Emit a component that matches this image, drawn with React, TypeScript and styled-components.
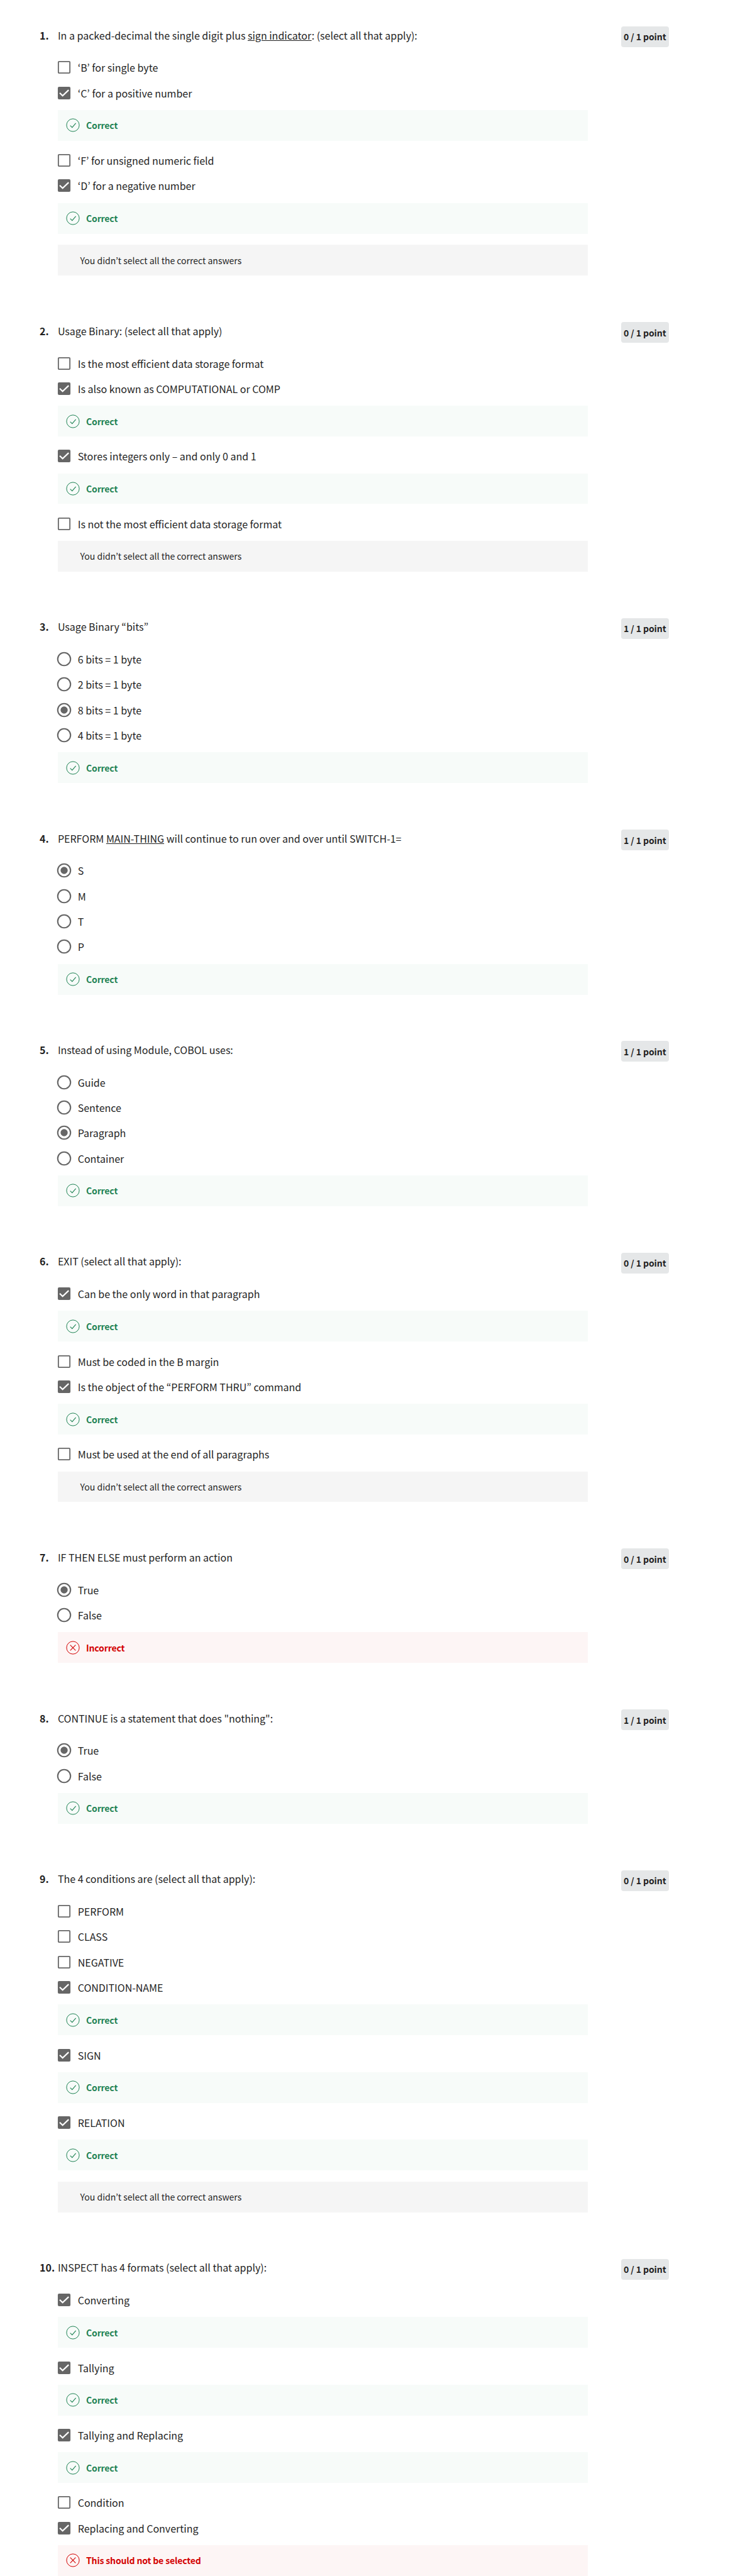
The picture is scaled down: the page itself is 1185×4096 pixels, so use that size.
import React from 'react';
import styled, { createGlobalStyle } from 'styled-components';

const Global = createGlobalStyle`
  body { margin: 0; background: #fff; }
`;

const Page = styled.main`
  box-sizing: border-box;
  width: 1185px;
  height: 4096px;
  overflow: hidden;
  padding: 38.6px 0 0 63px;
  font-family: 'Noto Sans CJK KR', 'Noto Sans', sans-serif;
  font-size: 16px;
  color: #1f1f1f;
`;

const QuestionRow = styled.section`
  display: grid;
  grid-template-columns: 28.9px 843px 52.9px 76px;
  margin-bottom: 70.5px;

  &:last-child {
    margin-bottom: 0;
  }
`;

const Num = styled.span`
  font-weight: 700;
  line-height: 34px;
  white-space: nowrap;
`;

const Body = styled.div`
  display: flex;
  flex-direction: column;
`;

const Title = styled.h2`
  margin: 0 0 14.6px;
  font-size: 16px;
  font-weight: 400;
  line-height: 34px;
`;

const OptionRow = styled.label`
  display: flex;
  align-items: center;
  height: 40.32px;
`;

const Mark = styled.svg`
  flex: none;
  width: 24px;
  height: 24px;
  margin: 0 9.8px 0 -2px;
`;

const OptionText = styled.span`
  line-height: 24px;
  white-space: nowrap;
`;

const tones = {
  ok: { bg: '#f7fbf9', fg: '#1f8354' },
  bad: { bg: '#fdf5f5', fg: '#d30001' },
  note: { bg: '#f5f5f5', fg: '#1f1f1f' },
};
type Tone = keyof typeof tones;

const Banner = styled.div<{ $tone: Tone }>`
  box-sizing: border-box;
  display: flex;
  flex: none;
  align-items: center;
  height: 48.9px;
  margin-top: 7.1px;
  padding-left: ${(p) => (p.$tone === 'note' ? 35.7 : 13.5)}px;
  background: ${(p) => tones[p.$tone].bg};
  color: ${(p) => tones[p.$tone].fg};
  font-size: 14px;
  font-weight: ${(p) => (p.$tone === 'note' ? 400 : 700)};
  line-height: 20px;
  letter-spacing: ${(p) => (p.$tone === 'note' ? 0 : -0.15)}px;

  & + label {
    margin-top: 11.15px;
  }

  & + & {
    margin-top: 17.9px;
  }
`;

const BannerIcon = styled.svg`
  flex: none;
  width: 22px;
  height: 22px;
  margin-right: 9.6px;
`;

const Points = styled.span`
  grid-column: 4;
  display: flex;
  align-items: center;
  justify-content: center;
  height: 33px;
  margin-top: 3.4px;
  border-radius: 4px;
  background: #e5e7e8;
  font-size: 14px;
  font-weight: 700;
  line-height: 20px;
  letter-spacing: -0.09px;
  white-space: nowrap;
`;

function CheckboxMark({ checked }: { checked: boolean }) {
  return (
    <Mark viewBox="0 0 24 24" fill="none">
      {checked ? (
        <>
          <rect x="1.95" y="1.95" width="20.1" height="20.1" rx="2" fill="#666" />
          <path d="M5 11.7 9.6 16.2 19.2 7.1" stroke="#fff" strokeWidth="2.2" />
        </>
      ) : (
        <rect x="2.85" y="2.85" width="18.3" height="18.3" rx="1.2" stroke="#666" strokeWidth="1.8" />
      )}
    </Mark>
  );
}

function RadioMark({ checked }: { checked: boolean }) {
  return (
    <Mark viewBox="0 0 24 24" fill="none">
      <circle cx="12" cy="12" r="10.2" stroke="#666" strokeWidth="2.1" />
      {checked && <circle cx="12" cy="12" r="5.7" fill="#666" />}
    </Mark>
  );
}

function Feedback({ tone, children }: { tone: Tone; children: React.ReactNode }) {
  return (
    <Banner $tone={tone}>
      {tone !== 'note' && (
        <BannerIcon viewBox="0 0 22 22" fill="none" stroke="currentColor">
          <circle cx="11" cy="11" r="10.1" strokeWidth="1" />
          {tone === 'ok' ? (
            <path d="M6.7 11.6 9.8 14.7 15.6 7.9" strokeWidth="1.1" />
          ) : (
            <path d="M6.7 6.7 15.3 15.3M15.3 6.7 6.7 15.3" strokeWidth="1.1" />
          )}
        </BannerIcon>
      )}
      {children}
    </Banner>
  );
}

type Choice = { text: string; checked?: boolean; verdict?: 'ok' | 'bad'; message?: string };
type Question = {
  title: React.ReactNode;
  kind: 'checkbox' | 'radio';
  score: 0 | 1;
  choices: Choice[];
  incomplete?: boolean;
};

const off = (text: string): Choice => ({ text });
const on = (text: string): Choice => ({ text, checked: true });
const judged = (choice: Choice, verdict: 'ok' | 'bad' = 'ok', message = 'Correct'): Choice => ({
  ...choice,
  verdict,
  message,
});

const questions: Question[] = [
  {
    title: (
      <>
        In a packed-decimal the single digit plus <u>sign indicator</u>: (select all that apply):
      </>
    ),
    kind: 'checkbox',
    score: 0,
    choices: [
      off('‘B’ for single byte'),
      judged(on('‘C’ for a positive number')),
      off('‘F’ for unsigned numeric field'),
      judged(on('‘D’ for a negative number')),
    ],
    incomplete: true,
  },
  {
    title: 'Usage Binary: (select all that apply)',
    kind: 'checkbox',
    score: 0,
    choices: [
      off('Is the most efficient data storage format'),
      judged(on('Is also known as COMPUTATIONAL or COMP')),
      judged(on('Stores integers only – and only 0 and 1')),
      off('Is not the most efficient data storage format'),
    ],
    incomplete: true,
  },
  {
    title: 'Usage Binary “bits”',
    kind: 'radio',
    score: 1,
    choices: [off('6 bits = 1 byte'), off('2 bits = 1 byte'), on('8 bits = 1 byte'), judged(off('4 bits = 1 byte'))],
  },
  {
    title: (
      <>
        PERFORM <u>MAIN-THING</u> will continue to run over and over until SWITCH-1=
      </>
    ),
    kind: 'radio',
    score: 1,
    choices: [on('S'), off('M'), off('T'), judged(off('P'))],
  },
  {
    title: 'Instead of using Module, COBOL uses:',
    kind: 'radio',
    score: 1,
    choices: [off('Guide'), off('Sentence'), on('Paragraph'), judged(off('Container'))],
  },
  {
    title: 'EXIT (select all that apply):',
    kind: 'checkbox',
    score: 0,
    choices: [
      judged(on('Can be the only word in that paragraph')),
      off('Must be coded in the B margin'),
      judged(on('Is the object of the “PERFORM THRU” command')),
      off('Must be used at the end of all paragraphs'),
    ],
    incomplete: true,
  },
  {
    title: 'IF THEN ELSE must perform an action',
    kind: 'radio',
    score: 0,
    choices: [on('True'), judged(off('False'), 'bad', 'Incorrect')],
  },
  {
    title: 'CONTINUE is a statement that does "nothing":',
    kind: 'radio',
    score: 1,
    choices: [on('True'), judged(off('False'))],
  },
  {
    title: 'The 4 conditions are (select all that apply):',
    kind: 'checkbox',
    score: 0,
    choices: [
      off('PERFORM'),
      off('CLASS'),
      off('NEGATIVE'),
      judged(on('CONDITION-NAME')),
      judged(on('SIGN')),
      judged(on('RELATION')),
    ],
    incomplete: true,
  },
  {
    title: 'INSPECT has 4 formats (select all that apply):',
    kind: 'checkbox',
    score: 0,
    choices: [
      judged(on('Converting')),
      judged(on('Tallying')),
      judged(on('Tallying and Replacing')),
      off('Condition'),
      judged(on('Replacing and Converting'), 'bad', 'This should not be selected'),
    ],
  },
];

export default function App() {
  return (
    <>
      <Global />
      <Page>
        {questions.map((q, i) => (
          <QuestionRow key={i}>
            <Num>{i + 1}.</Num>
            <Body>
              <Title>{q.title}</Title>
              {q.choices.map((c) => (
                <React.Fragment key={c.text}>
                  <OptionRow>
                    {q.kind === 'radio' ? <RadioMark checked={!!c.checked} /> : <CheckboxMark checked={!!c.checked} />}
                    <OptionText>{c.text}</OptionText>
                  </OptionRow>
                  {c.verdict && <Feedback tone={c.verdict}>{c.message}</Feedback>}
                </React.Fragment>
              ))}
              {q.incomplete && <Feedback tone="note">You didn’t select all the correct answers</Feedback>}
            </Body>
            <Points>{q.score} / 1 point</Points>
          </QuestionRow>
        ))}
      </Page>
    </>
  );
}
